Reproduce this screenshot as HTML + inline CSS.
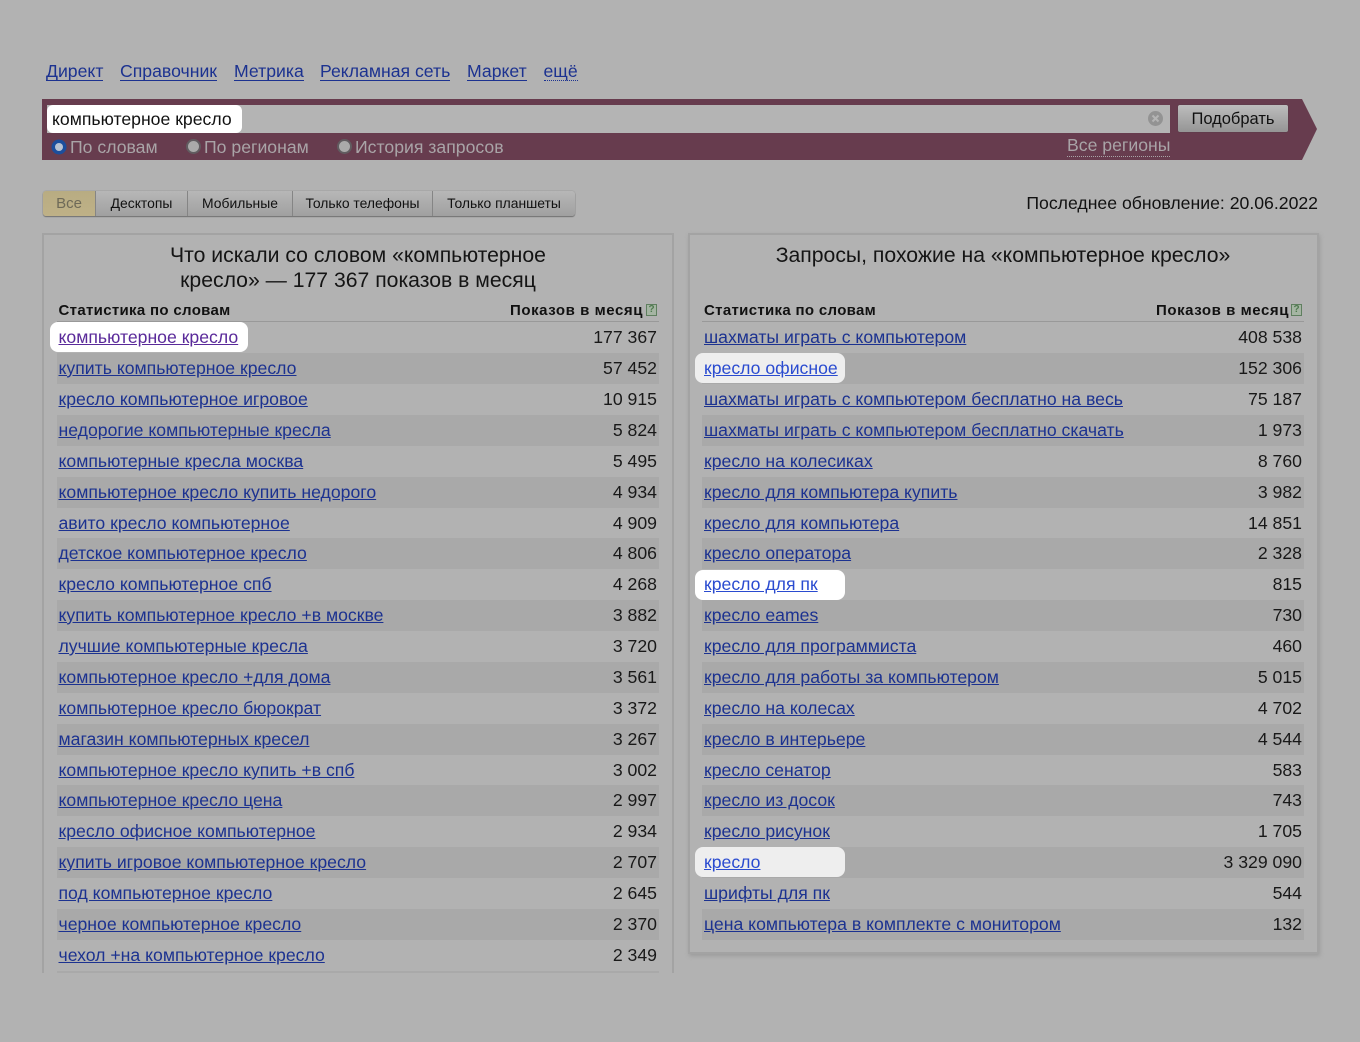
<!DOCTYPE html>
<html><head><meta charset="utf-8">
<style>
html,body{margin:0;padding:0;}
body{width:1360px;height:1042px;background:#b2b2b2;position:relative;overflow:hidden;font-family:"Liberation Sans",sans-serif;color:#111;}
a{color:#1c3290;text-decoration:underline;}
.abs,.nav a,.panel,.r,.hl{position:absolute;}
.nav a{top:62px;font-size:17.65px;line-height:18px;white-space:nowrap;text-decoration:none;border-bottom:1px solid #1c3290;}
.bar{position:absolute;left:42px;top:99px;width:1275px;height:61px;background:#673c4e;clip-path:polygon(0 0,1260px 0,1275px 30px,1260px 61px,0 61px);}
.input{position:absolute;left:47px;top:105px;width:1123px;height:28px;background:#b4b4b4;}
.btn{position:absolute;left:1178px;top:105px;width:110px;height:27px;box-sizing:border-box;border-radius:2px;background:linear-gradient(#bdbdbd,#959595);font-size:16.5px;line-height:29px;text-align:center;color:#111;box-shadow:0 0 1px #444;}
.rl{position:absolute;top:137px;font-size:17.65px;line-height:21px;color:#a9a4a7;white-space:nowrap;}
.dot{position:absolute;top:139px;width:11px;height:11px;border-radius:50%;background:#aaa;border:2px solid #615c60;}
.tabs{position:absolute;left:43px;top:191px;width:532px;height:25px;border-radius:3px;background:linear-gradient(#b7b7b7,#a0a0a0);box-shadow:0 1px 1px #707070,0 0 1px #777;font-size:13.9px;line-height:24px;}
.tabs span{position:absolute;top:0;height:25px;text-align:center;border-right:1px solid #858585;box-sizing:border-box;color:#111;}
.panel{top:233px;box-sizing:border-box;background:#b2b2b2;border:2px solid #a3a3a3;}
.title{position:absolute;font-size:21.2px;line-height:25px;text-align:center;color:#141414;white-space:nowrap;}
.h{position:absolute;top:302px;font-size:15px;line-height:18px;font-weight:bold;color:#111;letter-spacing:.32px;white-space:nowrap;}
.hr{letter-spacing:.56px;}
.line{position:absolute;top:321px;height:1px;background:#999;}
.r{height:31px;font-size:17.65px;line-height:31px;white-space:nowrap;}
.r a{position:absolute;top:0;left:0;}
.r b{position:absolute;right:2px;top:0;font-weight:normal;color:#191919;}
.L{left:57px;width:602px;}.L a{left:1.5px;}
.R{left:702px;width:602px;}.R a{left:2px;}
.s{background:#a9a9a9;}
.hl{height:30px;border-radius:8px;z-index:1;}
.t{z-index:2;}
.q{position:absolute;top:304px;width:11px;height:12px;box-sizing:border-box;border:1px solid #5f7f5f;background:#a5b5a3;color:#4f7a4f;font-size:10px;line-height:10px;text-align:center;font-weight:bold;}
</style></head>
<body>
<div class="nav">
<a style="left:46px">Директ</a><a style="left:120px">Справочник</a><a style="left:234px">Метрика</a><a style="left:320px">Рекламная сеть</a><a style="left:467px">Маркет</a><a style="left:543.5px;border-bottom:1px dotted #1c3290">ещё</a>
</div>

<div class="bar"></div>
<div class="input"></div>
<div class="abs" style="left:47px;top:105px;width:195px;height:28px;background:#fff;border-radius:6px;"></div>
<div class="abs" style="left:52px;top:109px;font-size:17.65px;line-height:21px;color:#111;white-space:nowrap;">компьютерное кресло</div>
<svg class="abs" style="left:1147px;top:110px" width="17" height="17" viewBox="0 0 17 17"><circle cx="8.5" cy="8.5" r="7.5" fill="#939393"/><path d="M5.5 5.5l6 6M11.5 5.5l-6 6" stroke="#b4b4b4" stroke-width="2"/></svg>
<div class="btn">Подобрать</div>
<svg class="abs" style="left:51px;top:139px" width="16" height="16" viewBox="0 0 16 16"><circle cx="8" cy="8" r="7.5" fill="#1c4e9c"/><circle cx="8" cy="8" r="4" fill="#b7c2d2"/></svg>
<div class="rl" style="left:70px">По словам</div>
<div class="dot" style="left:186px"></div>
<div class="rl" style="left:204px">По регионам</div>
<div class="dot" style="left:337px"></div>
<div class="rl" style="left:355px">История запросов</div>
<div class="rl" style="left:1067px;top:135px;border-bottom:1px dotted #a9a4a7;line-height:21px;">Все регионы</div>

<div class="tabs">
<span style="left:0;width:53px;background:linear-gradient(#b8ac82,#bfb187);color:#6e6a58;border-radius:3px 0 0 3px;font-size:15px;line-height:26px;">Все</span>
<span style="left:53px;width:92px">Десктопы</span>
<span style="left:145px;width:105px">Мобильные</span>
<span style="left:250px;width:140px">Только телефоны</span>
<span style="left:390px;width:142px;border-right:0">Только планшеты</span>
</div>
<div class="abs" style="right:42px;top:193px;font-size:17.65px;line-height:21px;color:#111;white-space:nowrap;">Последнее обновление: 20.06.2022</div>

<div class="panel" style="left:42px;width:632px;height:760px;border-bottom:0;"></div>
<div class="panel" style="left:688px;width:631px;height:721px;box-shadow:1px 2px 4px #9c9c9c;"></div>
<div class="abs" style="left:30px;top:973px;width:650px;height:69px;background:#b2b2b2"></div>

<div class="title" style="left:57px;width:602px;top:243px">Что искали со словом «компьютерное<br>кресло» — 177 367 показов в месяц</div>
<div class="title" style="left:702px;width:602px;top:243px">Запросы, похожие на «компьютерное кресло»</div>

<div class="h" style="left:58.5px">Статистика по словам</div>
<div class="h hr" style="right:717px">Показов в месяц</div>
<div class="q" style="left:646px">?</div>
<div class="line" style="left:57px;width:602px"></div>
<div class="h" style="left:704px">Статистика по словам</div>
<div class="h hr" style="right:71px">Показов в месяц</div>
<div class="q" style="left:1291px">?</div>
<div class="line" style="left:702px;width:602px"></div>

<div class="hl" style="left:50px;top:322px;width:198px;background:#fff;"></div>
<div class="hl" style="left:695px;top:353px;width:150px;background:#eeeeee;"></div>
<div class="hl" style="left:695px;top:570px;width:150px;background:#fff;"></div>
<div class="hl" style="left:695px;top:847px;width:150px;background:#eeeeee;"></div>

<div class="r L t" style="top:322px"><a style="color:#5a2a9a">компьютерное кресло</a><b>177 367</b></div>
<div class="r L s" style="top:353px"><a>купить компьютерное кресло</a><b>57 452</b></div>
<div class="r L" style="top:384px"><a>кресло компьютерное игровое</a><b>10 915</b></div>
<div class="r L s" style="top:415px"><a>недорогие компьютерные кресла</a><b>5 824</b></div>
<div class="r L" style="top:446px"><a>компьютерные кресла москва</a><b>5 495</b></div>
<div class="r L s" style="top:477px"><a>компьютерное кресло купить недорого</a><b>4 934</b></div>
<div class="r L" style="top:508px"><a>авито кресло компьютерное</a><b>4 909</b></div>
<div class="r L s" style="top:538px"><a>детское компьютерное кресло</a><b>4 806</b></div>
<div class="r L" style="top:569px"><a>кресло компьютерное спб</a><b>4 268</b></div>
<div class="r L s" style="top:600px"><a>купить компьютерное кресло +в москве</a><b>3 882</b></div>
<div class="r L" style="top:631px"><a>лучшие компьютерные кресла</a><b>3 720</b></div>
<div class="r L s" style="top:662px"><a>компьютерное кресло +для дома</a><b>3 561</b></div>
<div class="r L" style="top:693px"><a>компьютерное кресло бюрократ</a><b>3 372</b></div>
<div class="r L s" style="top:724px"><a>магазин компьютерных кресел</a><b>3 267</b></div>
<div class="r L" style="top:755px"><a>компьютерное кресло купить +в спб</a><b>3 002</b></div>
<div class="r L s" style="top:785px"><a>компьютерное кресло цена</a><b>2 997</b></div>
<div class="r L" style="top:816px"><a>кресло офисное компьютерное</a><b>2 934</b></div>
<div class="r L s" style="top:847px"><a>купить игровое компьютерное кресло</a><b>2 707</b></div>
<div class="r L" style="top:878px"><a>под компьютерное кресло</a><b>2 645</b></div>
<div class="r L s" style="top:909px"><a>черное компьютерное кресло</a><b>2 370</b></div>
<div class="r L" style="top:940px"><a>чехол +на компьютерное кресло</a><b>2 349</b></div>
<div class="abs s" style="left:57px;top:971px;width:602px;height:2px"></div>

<div class="r R" style="top:322px"><a>шахматы играть с компьютером</a><b>408 538</b></div>
<div class="r R s" style="top:353px"></div>
<div class="r R t" style="top:353px"><a style="color:#2a4bd0">кресло офисное</a><b>152 306</b></div>
<div class="r R" style="top:384px"><a>шахматы играть с компьютером бесплатно на весь</a><b>75 187</b></div>
<div class="r R s" style="top:415px"><a>шахматы играть с компьютером бесплатно скачать</a><b>1 973</b></div>
<div class="r R" style="top:446px"><a>кресло на колесиках</a><b>8 760</b></div>
<div class="r R s" style="top:477px"><a>кресло для компьютера купить</a><b>3 982</b></div>
<div class="r R" style="top:508px"><a>кресло для компьютера</a><b>14 851</b></div>
<div class="r R s" style="top:538px"><a>кресло оператора</a><b>2 328</b></div>
<div class="r R t" style="top:569px"><a style="color:#2a4bd0">кресло для пк</a><b>815</b></div>
<div class="r R s" style="top:600px"><a>кресло eames</a><b>730</b></div>
<div class="r R" style="top:631px"><a>кресло для программиста</a><b>460</b></div>
<div class="r R s" style="top:662px"><a>кресло для работы за компьютером</a><b>5 015</b></div>
<div class="r R" style="top:693px"><a>кресло на колесах</a><b>4 702</b></div>
<div class="r R s" style="top:724px"><a>кресло в интерьере</a><b>4 544</b></div>
<div class="r R" style="top:755px"><a>кресло сенатор</a><b>583</b></div>
<div class="r R s" style="top:785px"><a>кресло из досок</a><b>743</b></div>
<div class="r R" style="top:816px"><a>кресло рисунок</a><b>1 705</b></div>
<div class="r R s" style="top:847px"></div>
<div class="r R t" style="top:847px"><a style="color:#2a4bd0">кресло</a><b>3 329 090</b></div>
<div class="r R" style="top:878px"><a>шрифты для пк</a><b>544</b></div>
<div class="r R s" style="top:909px"><a>цена компьютера в комплекте с монитором</a><b>132</b></div>
</body></html>
